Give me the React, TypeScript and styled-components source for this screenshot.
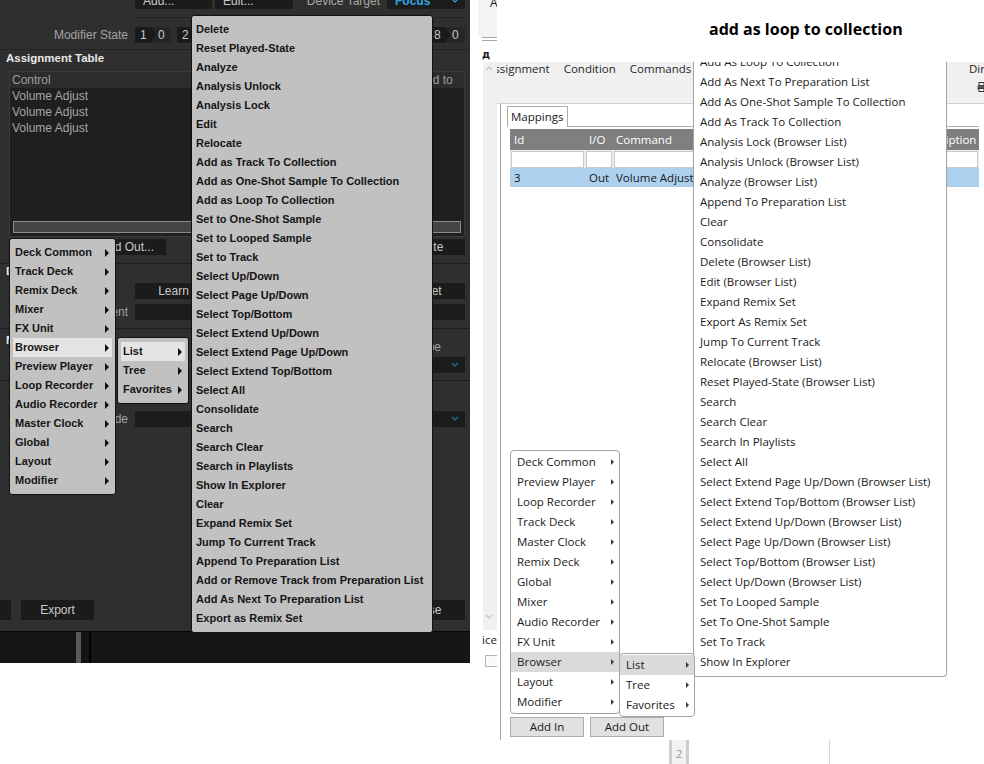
import React from "react";
import styled, { createGlobalStyle } from "styled-components";

const GlobalStyle = createGlobalStyle`
  html, body { margin: 0; padding: 0; background: #ffffff; }
  body { width: 984px; height: 764px; overflow: hidden; }
  * { box-sizing: border-box; }
`;

const Page = styled.div`
  position: relative;
  width: 984px;
  height: 764px;
  display: flex;
  align-items: flex-start;
  background: #ffffff;
  overflow: hidden;
`;

/* ---------------- Left (dark) application ---------------- */

const Left = styled.div`
  width: 470px;
  height: 663px;
  flex: none;
  background: #2f2f2f;
  display: flex;
  flex-direction: column;
  font-family: "Liberation Sans", Arial, sans-serif;
  font-size: 12px;
  color: #a3a3a3;
  overflow: hidden;
`;

const TopRow = styled.div`
  margin: -7px 5px 0 135px;
  height: 25px;
  border-bottom: 1px solid #232323;
  display: flex;
  align-items: flex-start;
  gap: 3px;
  flex: none;
`;

const DarkButton = styled.div<{ $w: number; $align?: string; $h?: number }>`
  width: ${(p) => p.$w}px;
  height: ${(p) => p.$h || 16}px;
  line-height: ${(p) => p.$h || 16}px;
  background: #1b1b1b;
  color: #c9c9c9;
  padding: 0 8px;
  text-align: ${(p) => p.$align || "center"};
  white-space: nowrap;
  overflow: hidden;
  flex: none;
`;

const TargetLabel = styled.div`
  width: 91px;
  padding-right: 4px;
  text-align: right;
  line-height: 16px;
  color: #a8a8a8;
  white-space: nowrap;
`;

const Select = styled.div<{ $w?: number; $h?: number; $accent?: boolean }>`
  width: ${(p) => (p.$w ? p.$w + "px" : "auto")};
  flex: ${(p) => (p.$w ? "none" : "1")};
  height: ${(p) => p.$h || 16}px;
  background: #1c1c1c;
  display: flex;
  align-items: center;
  justify-content: space-between;
  padding: 0 6px 0 8px;
  color: ${(p) => (p.$accent ? "#2fa8e6" : "#a8a8a8")};
  font-weight: ${(p) => (p.$accent ? 700 : 400)};
`;

const ModRow = styled.div`
  height: 32px;
  border-bottom: 1px solid #222222;
  display: flex;
  align-items: center;
  padding-top: 2px;
  flex: none;
`;

const FieldLabel = styled.div`
  width: 135px;
  padding-right: 7px;
  text-align: right;
  color: #a3a3a3;
  white-space: nowrap;
  flex: none;
`;

const ModBoxes = styled.div`
  display: flex;
  gap: 6px;
`;

const ModBox = styled.div`
  width: 36px;
  height: 16px;
  background: #262626;
  display: flex;
  color: #c8c8c8;
  line-height: 16px;
`;

const ModKey = styled.div`
  width: 21px;
  height: 16px;
  background: #1a1a1a;
  padding-left: 5px;
  clip-path: polygon(0 0, 16px 0, 21px 8px, 16px 16px, 0 16px);
`;

const ModVal = styled.div`
  padding-left: 2px;
`;

const SectionTitle = styled.div<{ $h: number; $lh?: number }>`
  height: ${(p) => p.$h}px;
  line-height: ${(p) => p.$lh || p.$h}px;
  padding-left: 6px;
  color: #e8e8e8;
  font-weight: 700;
  font-size: 11.5px;
  white-space: nowrap;
  flex: none;
`;

const TableBox = styled.div`
  margin: 0 5px 0 9px;
  height: 166px;
  background: #1f1f1f;
  border: 1px solid #3a3a3a;
  display: flex;
  flex-direction: column;
  flex: none;
`;

const DarkHeader = styled.div`
  height: 16px;
  line-height: 16px;
  background: #2c2c2c;
  display: flex;
  justify-content: space-between;
  color: #9e9e9e;
  padding: 0 4px 0 2px;
`;

const DarkCell = styled.div<{ $w?: number }>`
  width: ${(p) => (p.$w ? p.$w + "px" : "auto")};
  white-space: nowrap;
  overflow: hidden;
`;

const DarkRow = styled.div`
  height: 16px;
  line-height: 16px;
  padding-left: 2px;
  color: #a6a6a6;
`;

const Grow = styled.div`
  flex: 1;
`;

const HScroll = styled.div`
  margin: 0 3px 3px 3px;
  height: 12px;
  border: 1px solid #8a8a8a;
  background: #444444;
  flex: none;
`;

const ButtonRow = styled.div<{ $mt: number; $pl?: number; $h?: number }>`
  margin-top: ${(p) => p.$mt}px;
  padding: 0 5px 0 ${(p) => p.$pl ?? 9}px;
  height: ${(p) => p.$h || 16}px;
  display: flex;
  justify-content: space-between;
  flex: none;
`;

const ButtonGroup = styled.div<{ $gap: number; $ml?: number }>`
  display: flex;
  gap: ${(p) => p.$gap}px;
  margin-left: ${(p) => p.$ml ?? 0}px;
`;

const Divider = styled.div<{ $mt: number; $c?: string }>`
  margin-top: ${(p) => p.$mt}px;
  height: 1px;
  background: ${(p) => p.$c || "#1d1d1d"};
  flex: none;
`;

const FieldRow = styled.div<{ $mt: number; $h?: number }>`
  margin-top: ${(p) => p.$mt}px;
  height: ${(p) => p.$h || 16}px;
  display: flex;
  align-items: center;
  padding-right: 5px;
  flex: none;
`;

const Input = styled.div`
  flex: 1;
  height: 16px;
  background: #1c1c1c;
`;

const DetailsBlock = styled.div`
  height: 52px;
  border-bottom: 1px solid #1d1d1d;
  display: flex;
  justify-content: space-between;
  padding-right: 5px;
  flex: none;
`;

const DetailsSide = styled.div`
  width: 78px;
  display: flex;
  flex-direction: column;
  padding-top: 11px;
`;

const SmallLabel = styled.div`
  height: 14px;
  line-height: 14px;
  padding-left: 28px;
  margin-bottom: 3px;
  color: #a3a3a3;
  white-space: nowrap;
`;

const BottomStrip = styled.div`
  height: 32px;
  border-top: 1px solid #050505;
  background: #151515;
  display: flex;
  flex: none;
`;

const StripMark = styled.div<{ $ml: number; $w: number; $c: string }>`
  margin-left: ${(p) => p.$ml}px;
  width: ${(p) => p.$w}px;
  background: ${(p) => p.$c};
`;

/* ---------------- Dark context menus ---------------- */

const DarkMenu = styled.div<{ $x: number; $y: number; $w: number; $pl?: number }>`
  position: absolute;
  left: ${(p) => p.$x}px;
  top: ${(p) => p.$y}px;
  width: ${(p) => p.$w}px;
  background: #c1c1c1;
  border: 1px solid #111111;
  border-radius: 3px;
  padding: 4px 3px 4px ${(p) => p.$pl ?? 3}px;
  font-family: "Liberation Sans", Arial, sans-serif;
  font-weight: 700;
  font-size: 11px;
  color: #151515;
  z-index: 5;
`;

const DarkItem = styled.div<{ $on?: boolean }>`
  height: 19px;
  line-height: 19px;
  padding: 0 3px 0 2px;
  display: flex;
  align-items: center;
  justify-content: space-between;
  white-space: nowrap;
  background: ${(p) => (p.$on ? "#e4e4e4" : "transparent")};
`;

const DarkArrow = styled.span`
  width: 0;
  height: 0;
  border-left: 4px solid #111111;
  border-top: 4px solid transparent;
  border-bottom: 4px solid transparent;
`;

/* ---------------- Right (light) application ---------------- */

const Right = styled.div`
  flex: 1;
  height: 764px;
  display: flex;
  padding-left: 8px;
  font-family: "Open Sans", "Noto Sans", sans-serif;
  font-size: 11.5px;
  color: #1a1a1a;
`;

const Sliver = styled.div`
  width: 19px;
  display: flex;
  flex-direction: column;
  flex: none;
  overflow: hidden;
`;

const SliverTop = styled.div`
  height: 37px;
  background: #f3f3f3;
  padding-left: 12px;
  line-height: 12px;
  font-size: 12px;
  overflow: hidden;
`;

const SliverTopText = styled.div`
  margin-top: -3px;
`;

const SliverLines = styled.div`
  height: 4px;
  border-top: 1px solid #a8a8a8;
  border-bottom: 1px solid #a8a8a8;
  margin-left: 4px;
`;

const SliverMid = styled.div`
  height: 21px;
  padding: 8px 0 0 4px;
  font-family: "DejaVu Sans", sans-serif;
  font-weight: 700;
  font-size: 10px;
  line-height: 12px;
`;

const SliverScroll = styled.div`
  margin-left: 5px;
  height: 568px;
  background: #f0f0f0;
  display: flex;
  flex-direction: column;
  justify-content: space-between;
  padding: 3px 0 10px 2px;
`;

const SliverText = styled.div`
  margin-top: 2px;
  padding-left: 4px;
  line-height: 16px;
  white-space: nowrap;
`;

const SliverBox = styled.div`
  margin: 7px 0 0 7px;
  height: 12px;
  border: 1px solid #b5b5b5;
  border-right: none;
  background: #fafafa;
`;

const Main = styled.div`
  width: 487px;
  display: flex;
  flex-direction: column;
  flex: none;
`;

const TitleBar = styled.div`
  height: 62px;
  padding: 19px 0 0 212px;
  font-weight: 700;
  font-size: 16px;
  line-height: 20px;
  color: #000000;
  white-space: nowrap;
  flex: none;
`;

const Toolbar = styled.div`
  height: 42px;
  background: #f0f0f0;
  border-bottom: 1px solid #cfcfcf;
  display: flex;
  align-items: flex-start;
  gap: 14px;
  overflow: hidden;
  flex: none;
`;

const ToolTab = styled.div<{ $ml?: number }>`
  margin-left: ${(p) => p.$ml ?? 0}px;
  line-height: 14px;
  white-space: nowrap;
  color: #262626;
`;

const ToolRight = styled.div`
  margin-left: auto;
  margin-right: -2px;
  display: flex;
  flex-direction: column;
  gap: 6px;
  line-height: 14px;
  width: 17px;
`;

const ToolIcon = styled.div`
  align-self: flex-end;
  display: flex;
`;

const Content = styled.div`
  margin-left: 3px;
  flex: 1;
  border-left: 1px solid #a6a6a6;
  display: flex;
  flex-direction: column;
  padding: 2px 5px 3px 6px;
`;

const TabStrip = styled.div`
  height: 21px;
  border-bottom: 1px solid #adadad;
  display: flex;
  flex: none;
`;

const Tab = styled.div`
  height: 21px;
  border: 1px solid #adadad;
  border-bottom: none;
  background: #ffffff;
  padding: 0 3px;
  line-height: 19px;
`;

const GridTable = styled.div`
  margin: 2px 0 0 3px;
  flex: 1;
  display: flex;
  flex-direction: column;
  background: #ffffff;
`;

const GridRow = styled.div<{ $h: number; $bg: string; $color?: string }>`
  height: ${(p) => p.$h}px;
  background: ${(p) => p.$bg};
  color: ${(p) => p.$color || "#1a1a1a"};
  display: grid;
  grid-template-columns: 75px 28px 1fr 67px;
  align-items: center;
  white-space: nowrap;
  flex: none;
`;

const GridCell = styled.div<{ $pl?: number }>`
  padding-left: ${(p) => p.$pl ?? 4}px;
  overflow: hidden;
`;

const FilterCell = styled.div`
  height: 17px;
  margin: 0 1px;
  background: #ffffff;
  border: 1px solid #c9c9c9;
`;

const WinButton = styled.div`
  width: 74px;
  height: 20px;
  line-height: 18px;
  background: #e1e1e1;
  border: 1px solid #adadad;
  text-align: center;
  color: #1a1a1a;
`;

const WinButtons = styled.div`
  margin: 8px 0 0 3px;
  display: flex;
  gap: 6px;
  flex: none;
`;

const BottomArea = styled.div`
  height: 24px;
  display: flex;
  flex: none;
`;

const OtherBar = styled.div<{ $ml: number }>`
  margin-left: ${(p) => p.$ml}px;
  width: 20px;
  border-left: 3px solid #cdcdcd;
  border-right: 3px solid #cdcdcd;
  background: #f2f2f2;
  color: #9a9a9a;
  font-size: 11px;
  padding: 6px 0 0 4px;
`;

const OtherLine = styled.div<{ $ml: number }>`
  margin-left: ${(p) => p.$ml}px;
  width: 1px;
  background: #d4d4d4;
`;

/* ---------------- Light context menus ---------------- */

const LightMenu = styled.div<{ $x: number; $y: number; $w: number; $h?: number }>`
  position: absolute;
  left: ${(p) => p.$x}px;
  top: ${(p) => p.$y}px;
  width: ${(p) => p.$w}px;
  height: ${(p) => (p.$h ? p.$h + "px" : "auto")};
  background: #ffffff;
  border: 1px solid #a3a3a3;
  border-radius: 4px;
  padding: 1px 0;
  font-family: "Open Sans", "Noto Sans", sans-serif;
  font-size: 11.5px;
  color: #1a1a1a;
  overflow: hidden;
  z-index: 5;
`;

const ScrolledMenu = styled(LightMenu)`
  border-top: none;
  border-radius: 0 0 4px 4px;
  padding: 0;
`;

const ScrolledList = styled.div`
  margin-top: -10px;
`;

const LightItem = styled.div<{ $on?: boolean; $pl?: number }>`
  height: 20px;
  line-height: 20px;
  padding: 0 5px 0 ${(p) => p.$pl ?? 6}px;
  display: flex;
  align-items: center;
  justify-content: space-between;
  white-space: nowrap;
  background: ${(p) => (p.$on ? "#dadada" : "transparent")};
`;

const LightArrow = styled.span`
  width: 0;
  height: 0;
  border-left: 3px solid #3c3c3c;
  border-top: 3px solid transparent;
  border-bottom: 3px solid transparent;
`;

/* ---------------- icons ---------------- */

const Chevron = ({ color, up }: { color: string; up?: boolean }) => (
  <svg width="8" height="6" viewBox="0 0 8 6">
    <path d={up ? "M1 5 L4 2 L7 5" : "M1 1 L4 4 L7 1"} fill="none" stroke={color} strokeWidth="1.2" />
  </svg>
);

const PrinterIcon = () => (
  <svg width="9" height="10" viewBox="0 0 9 10">
    <rect x="2" y="0.5" width="5" height="3" fill="none" stroke="#333" />
    <rect x="0.5" y="3.5" width="8" height="4" fill="#555" />
    <rect x="2" y="6.5" width="5" height="3" fill="#fff" stroke="#333" />
  </svg>
);

/* ---------------- data ---------------- */

const categoriesDark = [
  "Deck Common", "Track Deck", "Remix Deck", "Mixer", "FX Unit", "Browser",
  "Preview Player", "Loop Recorder", "Audio Recorder", "Master Clock", "Global", "Layout", "Modifier",
];

const categoriesLight = [
  "Deck Common", "Preview Player", "Loop Recorder", "Track Deck", "Master Clock", "Remix Deck",
  "Global", "Mixer", "Audio Recorder", "FX Unit", "Browser", "Layout", "Modifier",
];

const subItems = ["List", "Tree", "Favorites"];

const darkCommands = [
  "Delete", "Reset Played-State", "Analyze", "Analysis Unlock", "Analysis Lock", "Edit", "Relocate",
  "Add as Track To Collection", "Add as One-Shot Sample To Collection", "Add as Loop To Collection",
  "Set to One-Shot Sample", "Set to Looped Sample", "Set to Track", "Select Up/Down",
  "Select Page Up/Down", "Select Top/Bottom", "Select Extend Up/Down", "Select Extend Page Up/Down",
  "Select Extend Top/Bottom", "Select All", "Consolidate", "Search", "Search Clear",
  "Search in Playlists", "Show In Explorer", "Clear", "Expand Remix Set", "Jump To Current Track",
  "Append To Preparation List", "Add or Remove Track from Preparation List",
  "Add As Next To Preparation List", "Export as Remix Set",
];

const lightCommands = [
  "Add As Loop To Collection", "Add As Next To Preparation List", "Add As One-Shot Sample To Collection",
  "Add As Track To Collection", "Analysis Lock (Browser List)", "Analysis Unlock (Browser List)",
  "Analyze (Browser List)", "Append To Preparation List", "Clear", "Consolidate",
  "Delete (Browser List)", "Edit (Browser List)", "Expand Remix Set", "Export As Remix Set",
  "Jump To Current Track", "Relocate (Browser List)", "Reset Played-State (Browser List)", "Search",
  "Search Clear", "Search In Playlists", "Select All", "Select Extend Page Up/Down (Browser List)",
  "Select Extend Top/Bottom (Browser List)", "Select Extend Up/Down (Browser List)",
  "Select Page Up/Down (Browser List)", "Select Top/Bottom (Browser List)",
  "Select Up/Down (Browser List)", "Set To Looped Sample", "Set To One-Shot Sample", "Set To Track",
  "Show In Explorer",
];

export default function App() {
  return (
    <Page>
      <GlobalStyle />

      <Left>
        <TopRow>
          <DarkButton $w={77} $align="left">Add...</DarkButton>
          <DarkButton $w={78} $align="left">Edit...</DarkButton>
          <TargetLabel>Device Target</TargetLabel>
          <Select $w={78} $accent>
            <span>Focus</span>
            <Chevron color="#2fa8e6" />
          </Select>
        </TopRow>

        <ModRow>
          <FieldLabel>Modifier State</FieldLabel>
          <ModBoxes>
            {[1, 2, 3, 4, 5, 6, 7, 8].map((n) => (
              <ModBox key={n}>
                <ModKey>{n}</ModKey>
                <ModVal>0</ModVal>
              </ModBox>
            ))}
          </ModBoxes>
        </ModRow>

        <SectionTitle $h={21} $lh={16}>Assignment Table</SectionTitle>

        <TableBox>
          <DarkHeader>
            <DarkCell>Control</DarkCell>
            <DarkCell $w={64}>Mapped to</DarkCell>
          </DarkHeader>
          <DarkRow>Volume Adjust</DarkRow>
          <DarkRow>Volume Adjust</DarkRow>
          <DarkRow>Volume Adjust</DarkRow>
          <Grow />
          <HScroll />
        </TableBox>

        <ButtonRow $mt={2}>
          <ButtonGroup $gap={5}>
            <DarkButton $w={74}>Add In...</DarkButton>
            <DarkButton $w={78}>Add Out...</DarkButton>
          </ButtonGroup>
          <DarkButton $w={78}>Delete</DarkButton>
        </ButtonRow>

        <Divider $mt={8} />
        <SectionTitle $h={14}>Device Mapping</SectionTitle>

        <ButtonRow $mt={5} $pl={135}>
          <DarkButton $w={77}>Learn</DarkButton>
          <DarkButton $w={78}>Reset</DarkButton>
        </ButtonRow>

        <FieldRow $mt={5}>
          <FieldLabel>Comment</FieldLabel>
          <Input />
        </FieldRow>

        <Divider $mt={8} />
        <DetailsBlock>
          <SectionTitle $h={22}>Mapping Details</SectionTitle>
          <DetailsSide>
            <SmallLabel>Type</SmallLabel>
            <Select $w={78}>
              <span />
              <Chevron color="#1f7a92" />
            </Select>
          </DetailsSide>
        </DetailsBlock>

        <FieldRow $mt={30}>
          <FieldLabel>Mode</FieldLabel>
          <Select>
            <span />
            <Chevron color="#1f7a92" />
          </Select>
        </FieldRow>

        <Grow />

        <ButtonRow $mt={0} $pl={0} $h={20}>
          <ButtonGroup $gap={10} $ml={-62}>
            <DarkButton $w={73} $h={20}>Import</DarkButton>
            <DarkButton $w={73} $h={20}>Export</DarkButton>
          </ButtonGroup>
          <DarkButton $w={78} $h={20}>Close</DarkButton>
        </ButtonRow>
        <Divider $mt={10} $c="transparent" />

        <BottomStrip>
          <StripMark $ml={76} $w={5} $c="#5a5a5a" />
          <StripMark $ml={8} $w={2} $c="#000000" />
        </BottomStrip>
      </Left>

      <Right>
        <Sliver>
          <SliverTop>
            <SliverTopText>A</SliverTopText>
          </SliverTop>
          <SliverLines />
          <SliverMid>д</SliverMid>
          <SliverScroll>
            <Chevron color="#c2c2c2" up />
            <Chevron color="#c2c2c2" />
          </SliverScroll>
          <SliverText>ice</SliverText>
          <SliverBox />
        </Sliver>

        <Main>
          <TitleBar>add as loop to collection</TitleBar>
          <Toolbar>
            <ToolTab $ml={-10}>Assignment</ToolTab>
            <ToolTab>Condition</ToolTab>
            <ToolTab>Commands</ToolTab>
            <ToolRight>
              <span>Dir</span>
              <ToolIcon>
                <PrinterIcon />
              </ToolIcon>
            </ToolRight>
          </Toolbar>

          <Content>
            <TabStrip>
              <Tab>Mappings</Tab>
            </TabStrip>
            <GridTable>
              <GridRow $h={21} $bg="#7f7f7f" $color="#ffffff">
                <GridCell>Id</GridCell>
                <GridCell>I/O</GridCell>
                <GridCell $pl={3}>Command</GridCell>
                <GridCell $pl={3}>Description</GridCell>
              </GridRow>
              <GridRow $h={18} $bg="#ececec">
                <FilterCell />
                <FilterCell />
                <FilterCell />
                <FilterCell />
              </GridRow>
              <GridRow $h={19} $bg="#add0ec">
                <GridCell>3</GridCell>
                <GridCell>Out</GridCell>
                <GridCell $pl={3}>Volume Adjust</GridCell>
                <GridCell />
              </GridRow>
            </GridTable>
            <WinButtons>
              <WinButton>Add In</WinButton>
              <WinButton>Add Out</WinButton>
            </WinButtons>
          </Content>

          <BottomArea>
            <OtherBar $ml={172}>2</OtherBar>
            <OtherLine $ml={140} />
          </BottomArea>
        </Main>
      </Right>

      {/* Dark menus */}
      <DarkMenu $x={9} $y={238} $w={107}>
        {categoriesDark.map((c) => (
          <DarkItem key={c} $on={c === "Browser"}>
            <span>{c}</span>
            <DarkArrow />
          </DarkItem>
        ))}
      </DarkMenu>
      <DarkMenu $x={117} $y={337} $w={72}>
        {subItems.map((c) => (
          <DarkItem key={c} $on={c === "List"}>
            <span>{c}</span>
            <DarkArrow />
          </DarkItem>
        ))}
      </DarkMenu>
      <DarkMenu $x={191} $y={15} $w={242} $pl={2}>
        {darkCommands.map((c) => (
          <DarkItem key={c}>{c}</DarkItem>
        ))}
      </DarkMenu>

      {/* Light menus */}
      <ScrolledMenu $x={693} $y={62} $w={254} $h={615}>
        <ScrolledList>
          {lightCommands.map((c) => (
            <LightItem key={c}>{c}</LightItem>
          ))}
        </ScrolledList>
      </ScrolledMenu>
      <LightMenu $x={510} $y={450} $w={110}>
        {categoriesLight.map((c) => (
          <LightItem key={c} $on={c === "Browser"}>
            <span>{c}</span>
            <LightArrow />
          </LightItem>
        ))}
      </LightMenu>
      <LightMenu $x={619} $y={653} $w={76}>
        {subItems.map((c) => (
          <LightItem key={c} $on={c === "List"}>
            <span>{c}</span>
            <LightArrow />
          </LightItem>
        ))}
      </LightMenu>
    </Page>
  );
}
